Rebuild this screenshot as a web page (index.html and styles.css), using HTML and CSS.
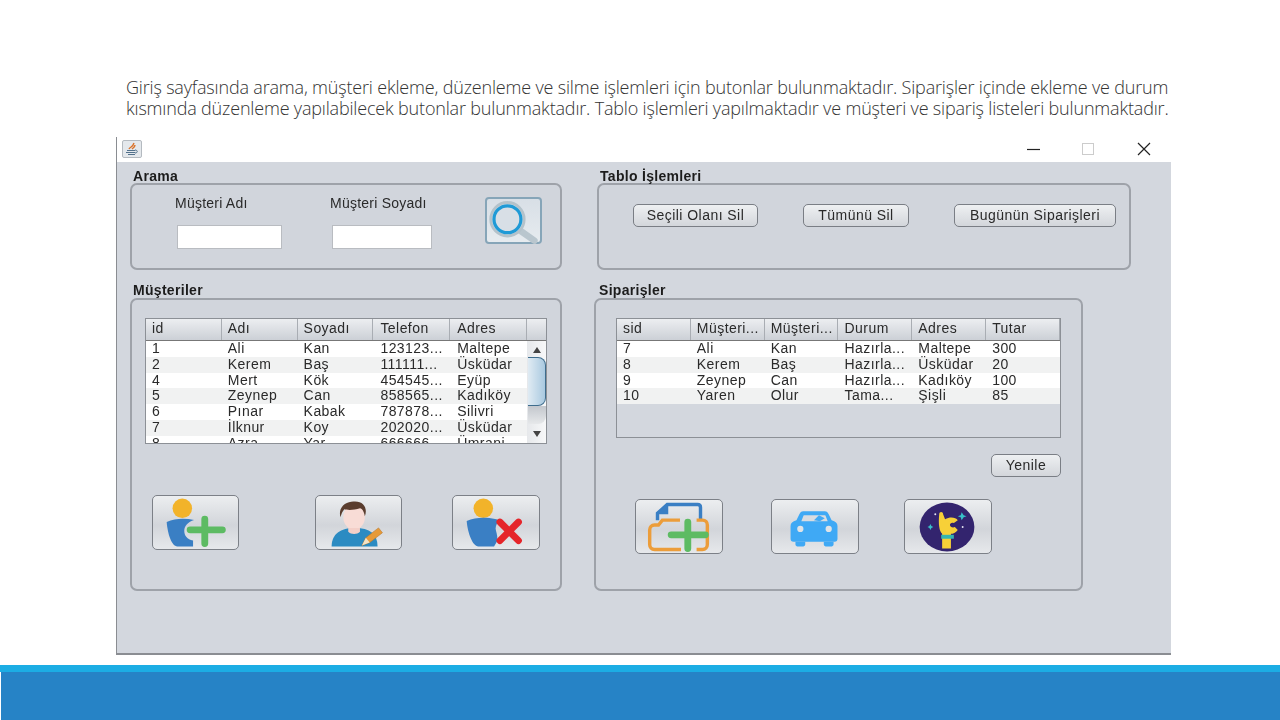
FILE: index.html
```html
<!DOCTYPE html>
<html lang="tr">
<head>
<meta charset="utf-8">
<title>Giriş sayfası</title>
<link rel="stylesheet" href="styles.css">
</head>
<body>
<p class="intro">Giriş sayfasında arama, müşteri ekleme, düzenleme ve silme işlemleri için butonlar bulunmaktadır. Siparişler içinde ekleme ve durum<br>kısmında düzenleme yapılabilecek butonlar bulunmaktadır. Tablo işlemleri yapılmaktadır ve müşteri ve sipariş listeleri bulunmaktadır.</p>

<div class="window">
  <div class="titlebar">
    <span class="java_icon">
      <svg width="18" height="16" viewBox="0 0 18 16">
        <path d="M6 8c1-2 4-2 5-6M9 8c1-1 3-2 3-4" fill="none" stroke="#d9722a" stroke-width="1.4"/>
        <path d="M4 9.5h8M3 11.5h9M5 13.5h7" stroke="#52718c" stroke-width="1.1"/>
        <path d="M12 9c3 0 3 3 0 3" fill="none" stroke="#52718c"/>
      </svg>
    </span>
    <span class="win_btn win_min">
      <svg width="14" height="14"><line x1="0" y1="7.5" x2="13" y2="7.5" stroke="#222" stroke-width="1.2"/></svg>
    </span>
    <span class="win_btn win_max">
      <svg width="14" height="14"><rect x="0.5" y="1.5" width="11" height="11" fill="none" stroke="#ccc"/></svg>
    </span>
    <span class="win_btn win_close">
      <svg width="14" height="14"><path d="M1 1l12 12M13 1L1 13" stroke="#222" stroke-width="1.2"/></svg>
    </span>
  </div>

  <div class="win_body">
    <div class="row row_top">
      <section class="group g_search">
        <h2>Arama</h2>
        <div class="box search_box">
          <div class="field f_name">
            <label>Müşteri Adı</label>
            <input type="text" class="input_name">
          </div>
          <div class="field f_surname">
            <label>Müşteri Soyadı</label>
            <input type="text" class="input_surname">
          </div>
          <button class="search_btn">
            <svg width="57" height="47" viewBox="0 0 57 47">
              <line x1="34" y1="31" x2="51" y2="43" stroke="#b9c6ce" stroke-width="7" stroke-linecap="round"/>
              <circle cx="22" cy="20" r="18" fill="#dfe5ea" stroke="#b4c2ca" stroke-width="3"/>
              <circle cx="22" cy="20" r="14.5" fill="#d8dfe6" stroke="#1f9ad6" stroke-width="3.5"/>
            </svg>
          </button>
        </div>
      </section>

      <section class="group g_table_ops">
        <h2>Tablo İşlemleri</h2>
        <div class="box ops_box">
          <button class="btn btn_sel">Seçili Olanı Sil</button>
          <button class="btn btn_all">Tümünü Sil</button>
          <button class="btn btn_today">Bugünün Siparişleri</button>
        </div>
      </section>
    </div>

    <div class="row row_bottom">
      <section class="group g_customers">
        <h2>Müşteriler</h2>
        <div class="box customers_box">
          <div class="table customers_table">
            <div class="thead">
              <span>id</span><span>Adı</span><span>Soyadı</span><span>Telefon</span><span>Adres</span><span class="th_corner"></span>
            </div>
            <div class="tbody_wrap">
              <div class="tbody">
                <div class="tr"><span>1</span><span>Ali</span><span>Kan</span><span>123123...</span><span>Maltepe</span></div>
                <div class="tr"><span>2</span><span>Kerem</span><span>Baş</span><span>111111...</span><span>Üsküdar</span></div>
                <div class="tr"><span>4</span><span>Mert</span><span>Kök</span><span>454545...</span><span>Eyüp</span></div>
                <div class="tr"><span>5</span><span>Zeynep</span><span>Can</span><span>858565...</span><span>Kadıköy</span></div>
                <div class="tr"><span>6</span><span>Pınar</span><span>Kabak</span><span>787878...</span><span>Silivri</span></div>
                <div class="tr"><span>7</span><span>İlknur</span><span>Koy</span><span>202020...</span><span>Üsküdar</span></div>
                <div class="tr"><span>8</span><span>Azra</span><span>Yar</span><span>666666...</span><span>Ümrani</span></div>
              </div>
              <div class="scrollbar">
                <svg class="arrow" width="10" height="8"><path d="M5 1l4 6H1z" fill="#444"/></svg>
                <div class="thumb"></div>
                <div class="track"></div>
                <svg class="arrow arrow_down" width="10" height="8"><path d="M1 1h8L5 7z" fill="#444"/></svg>
              </div>
            </div>
          </div>
          <div class="icon_row customers_icons">
            <button class="icon_btn">
              <svg width="87" height="54" viewBox="0 0 87 54">
                <circle cx="30" cy="12" r="10" fill="#f2b32a"/>
                <path d="M14 26c9-4 19-4 28-2-6 2-10 6-10 11s3 9 9 10v6H25c-6 0-10-13-11-25z" fill="#3a7fc4"/>
                <path d="M53 23v25M38 34h33" stroke="#5dbb63" stroke-width="7" stroke-linecap="round"/>
              </svg>
            </button>
            <button class="icon_btn">
              <svg width="87" height="54" viewBox="0 0 87 54">
                <path d="M16 51c0-13 9-19 24-19s23 6 23 19z" fill="#2b8bc2"/>
                <ellipse cx="39" cy="21" rx="11" ry="13" fill="#f8dcd6"/>
                <path d="M33 32h12v4c-3 3-9 3-12 0z" fill="#f3cfc8"/>
                <path d="M25 21c-3-12 8-17 15-16 9 0 13 7 10 15-1-5-3-8-5-8-6 2-13 2-16 1-2 2-3 5-4 8z" fill="#5a3d2e"/>
                <path d="M47 50l4-8 13-10 4 5-13 10z" fill="#e69a38" stroke="#b9772a" stroke-width=".6"/>
                <path d="M47 50l4-8 4 5z" fill="#f3e3c6"/>
              </svg>
            </button>
            <button class="icon_btn btn_wide">
              <svg width="88" height="54" viewBox="0 0 88 54">
                <circle cx="31" cy="12" r="10" fill="#f2b32a"/>
                <path d="M14 25c9-4 20-4 29-2 2 0 3 1 4 2-3 3-4 7-3 10 1 4 2 7 1 11l-3 5H26c-6 0-11-14-12-26z" fill="#3a7fc4"/>
                <path d="M48 26l19 19M67 26L48 45" stroke="#e5252a" stroke-width="7" stroke-linecap="round"/>
              </svg>
            </button>
          </div>
        </div>
      </section>

      <section class="group g_orders">
        <h2>Siparişler</h2>
        <div class="box orders_box">
          <div class="table orders_table">
            <div class="thead">
              <span>sid</span><span>Müşteri...</span><span>Müşteri...</span><span>Durum</span><span>Adres</span><span>Tutar</span>
            </div>
            <div class="tbody">
              <div class="tr"><span>7</span><span>Ali</span><span>Kan</span><span>Hazırla...</span><span>Maltepe</span><span>300</span></div>
              <div class="tr"><span>8</span><span>Kerem</span><span>Baş</span><span>Hazırla...</span><span>Üsküdar</span><span>20</span></div>
              <div class="tr"><span>9</span><span>Zeynep</span><span>Can</span><span>Hazırla...</span><span>Kadıköy</span><span>100</span></div>
              <div class="tr"><span>10</span><span>Yaren</span><span>Olur</span><span>Tama...</span><span>Şişli</span><span>85</span></div>
            </div>
          </div>
          <div class="refresh_row"><button class="btn btn_refresh">Yenile</button></div>
          <div class="icon_row orders_icons">
            <button class="icon_btn btn_wide">
              <svg width="88" height="54" viewBox="0 0 88 54">
                <path d="M22 20v-7L32 4h31c2 0 3 1 3 3v12" fill="none" stroke="#3a7fc4" stroke-width="3.5"/>
                <path d="M21 14L33 3v11z" fill="#3a7fc4"/>
                <path d="M45 20H27l-4 5h-4c-3 0-5 2-5 5v15c0 3 2 5 5 5h27M62 20h6c3 0 5 2 5 5v20c0 3-2 5-5 5h-6" fill="none" stroke="#ec9d3a" stroke-width="3.5"/>
                <path d="M53 22v27M36 35h35" stroke="#5dbb63" stroke-width="7" stroke-linecap="round"/>
              </svg>
            </button>
            <button class="icon_btn btn_wide">
              <svg width="88" height="54" viewBox="0 0 88 54">
                <path d="M25 20l3-6c1-2 2-3 4-3h22c2 0 3 1 4 3l3 6c4 1 6 3 6 6v13c0 2-1 3-3 3H22c-2 0-3-1-3-3V26c0-3 2-5 6-6z" fill="#3fa9f5"/>
                <path d="M30 21l2-5c0-1 1-1 2-1h19c1 0 2 0 2 1l2 5z" fill="#d8dce1"/>
                <path d="M48 15l-5 5 6 1 5-3z" fill="#3fa9f5"/>
                <circle cx="29" cy="29" r="3.2" fill="#dfe3e7"/>
                <circle cx="58" cy="29" r="3.2" fill="#dfe3e7"/>
                <path d="M24 42h10v3c0 1-1 2-2 2h-6c-1 0-2-1-2-2zM53 42h10v3c0 1-1 2-2 2h-6c-1 0-2-1-2-2z" fill="#3fa9f5"/>
              </svg>
            </button>
            <button class="icon_btn btn_wide">
              <svg width="88" height="54" viewBox="0 0 88 54">
                <ellipse cx="43" cy="27" rx="28" ry="25" fill="#33246e"/>
                <path d="M38 49V34c-3-3-4-10-3-20 0-3 4-3 4 0l2 5c5-3 11-2 13 1l-4 3c-2-1-4 0-4 2s3 3 5 2l3 3c-2 3-5 4-7 4v15z" fill="#f7d038"/>
                <rect x="37" y="35" width="13" height="4" fill="#35b5b0"/>
                <path d="M58 12l2 3 3 1-3 1-2 3-1-3-3-1 3-1zM26 24l1 2 2 1-2 1-1 2-1-2-2-1 2-1z" fill="#38c0c8"/>
                <circle cx="31" cy="14" r="1" fill="#e6e6f5"/>
                <circle cx="59" cy="27" r="1" fill="#e6e6f5"/>
              </svg>
            </button>
          </div>
        </div>
      </section>
    </div>
  </div>
</div>

<div class="footer">
  <div class="footer_band"></div>
  <div class="footer_main"></div>
</div>
</body>
</html>
```

FILE: styles.css
```css
html, body {
  margin: 0;
  height: 720px;
  overflow: hidden;
  background: #fff;
}

body {
  display: flex;
  flex-direction: column;
  font-family: "Liberation Sans", Arial, sans-serif;
}

.intro {
  flex: 0 0 137px;
  margin: 0;
  padding: 77px 0 0 126px;
  box-sizing: border-box;
  font-family: "Open Sans", sans-serif;
  font-weight: 300;
  font-size: 18px;
  line-height: 21px;
  letter-spacing: -0.18px;
  color: #333;
  white-space: nowrap;
}

/* the app window */
.window {
  flex: 0 0 518px;
  width: 1055px;
  margin-left: 116px;
  box-sizing: border-box;
  border-left: 1px solid #8a8d92;
  border-bottom: 2px solid #8a8d92;
  filter: blur(0.45px);
}

.titlebar {
  display: flex;
  align-items: center;
  height: 25px;
  padding-bottom: 2px;
  box-sizing: border-box;
  background: #fff;
}

.java_icon {
  display: flex;
  width: 18px;
  height: 16px;
  margin-left: 5px;
  border: 1px solid #b4bac0;
  border-radius: 2px;
  background: #e4e8ec;
}

.win_btn { display: flex; width: 14px; height: 14px; }
.win_min { margin-left: 885px; }
.win_max { margin-left: 41px; }
.win_close { margin-left: 41px; }

.win_body {
  height: 491px;
  box-sizing: border-box;
  padding: 7px 0 0 13px;
  background: #d3d7de;
  color: #2a2a2a;
  font-size: 14px;
  letter-spacing: 0.23px;
}

.row { display: flex; }
.row_top { gap: 35px; }
.row_bottom { gap: 32px; margin-top: 13px; }

.group h2 {
  margin: 0;
  padding-left: 3px;
  height: 14px;
  font-size: 14px;
  line-height: 14px;
  font-weight: bold;
  letter-spacing: 0.3px;
  color: #1c1c1c;
}
.row_bottom .group h2 { height: 15px; }
.g_orders h2 { padding-left: 5px; }

.box {
  box-sizing: border-box;
  border: 2px solid #9ea2a9;
  border-radius: 7px;
  background: #d1d5dc;
}

.search_box {
  display: flex;
  width: 432px;
  height: 87px;
  padding: 11px 0 0 43px;
}

.field { display: flex; flex-direction: column; }
.field label { height: 15px; line-height: 15px; }
.field input {
  height: 24px;
  margin: 14px 0 0 2px;
  padding: 0;
  box-sizing: border-box;
  border: 1px solid #b9bcc1;
  background: #fff;
}
.f_name { width: 107px; }
.f_surname { width: 102px; margin-left: 48px; }
.input_name { width: 105px; }
.input_surname { width: 100px; }

.search_btn {
  display: flex;
  width: 57px;
  height: 47px;
  margin: 1px 0 0 53px;
  padding: 0;
  box-sizing: border-box;
  border: 2px solid #86a5b8;
  border-radius: 4px;
  background: linear-gradient(#d8dfe6, #e6ebef);
  overflow: visible;
}

.ops_box {
  display: flex;
  gap: 45px;
  width: 534px;
  height: 87px;
  padding: 19px 0 0 34px;
}

.btn {
  height: 23px;
  padding: 0 0 1px;
  box-sizing: border-box;
  border: 1px solid #7a7e85;
  border-radius: 5px;
  background: linear-gradient(#eef0f2, #d3d6db);
  font-family: inherit;
  font-size: 14px;
  letter-spacing: 0.45px;
  color: #2a2a2a;
}
.btn_sel { width: 125px; }
.btn_all { width: 106px; }
.btn_today { width: 162px; }
.btn_refresh { width: 70px; }

.customers_box {
  width: 432px;
  height: 293px;
  padding: 18px 0 0 13px;
}

.orders_box {
  width: 489px;
  height: 293px;
  padding: 18px 0 0 20px;
}

/* swing style tables */
.table {
  box-sizing: border-box;
  border: 1px solid #8c9096;
  background: #d3d7de;
  letter-spacing: 0.45px;
}
.customers_table { width: 402px; height: 126px; overflow: hidden; }
.orders_table { width: 445px; height: 120px; }

.thead {
  display: flex;
  height: 21px;
  background: linear-gradient(#eceef1, #ccd0d6);
  border-bottom: 1px solid #777;
}
.thead span {
  flex: 1 1 0;
  box-sizing: border-box;
  padding-left: 6px;
  line-height: 18px;
  border-right: 1px solid #a9adb3;
}
.thead .th_corner { flex: 0 0 19px; padding: 0; border-right: 0; }
.customers_table span:nth-child(4),
.customers_table span:nth-child(5) { padding-left: 7px; }

.tbody_wrap { display: flex; height: 104px; overflow: hidden; }
.tbody_wrap .tbody { flex: 1; }

.tr { display: flex; height: 15.75px; background: #fff; }
.tr:nth-child(even) { background: #f1f2f2; }
.tr span {
  flex: 1 1 0;
  box-sizing: border-box;
  padding-left: 6px;
  line-height: 14px;
  white-space: nowrap;
}

.scrollbar {
  display: flex;
  flex-direction: column;
  align-items: center;
  flex: 0 0 19px;
  background: linear-gradient(90deg, #e6e8eb, #f7f8f9);
}
.arrow { margin-top: 5px; }
.thumb {
  width: 18px;
  height: 49px;
  margin-top: 3px;
  box-sizing: border-box;
  border: 1px solid #3f6d8d;
  border-left: 0;
  border-radius: 0 8px 8px 0;
  background: linear-gradient(90deg, #e0ebf3, #a9c9e0);
}
.track {
  width: 18px;
  height: 18px;
  border-radius: 0 0 8px 0;
  background: linear-gradient(#c3c7cd, #e6e8ea);
}
.arrow_down { margin-top: 6px; }

.refresh_row {
  display: flex;
  justify-content: flex-end;
  width: 445px;
  margin-top: 16px;
}

.icon_row { display: flex; }
.customers_icons { gap: 76px; margin: 51px 0 0 7px; }
.customers_icons .icon_btn:last-child { margin-left: -26px; }
.orders_icons { gap: 48px; margin: 22px 0 0 19px; }
.orders_icons .icon_btn:last-child { margin-left: -3px; }

.icon_btn {
  display: flex;
  width: 87px;
  height: 55px;
  padding: 0;
  box-sizing: border-box;
  border: 1px solid #7c8087;
  border-radius: 5px;
  background: linear-gradient(#eceef0, #d2d5da 55%, #e6e8eb);
}
.icon_btn.btn_wide { width: 88px; }

.footer {
  margin-top: 10px;
  flex: 0 0 55px;
}
.footer_band {
  height: 7px;
  background: #1cade4;
}
.footer_main {
  height: 48px;
  margin-left: 1px;
  background: #2683c6;
}
```
